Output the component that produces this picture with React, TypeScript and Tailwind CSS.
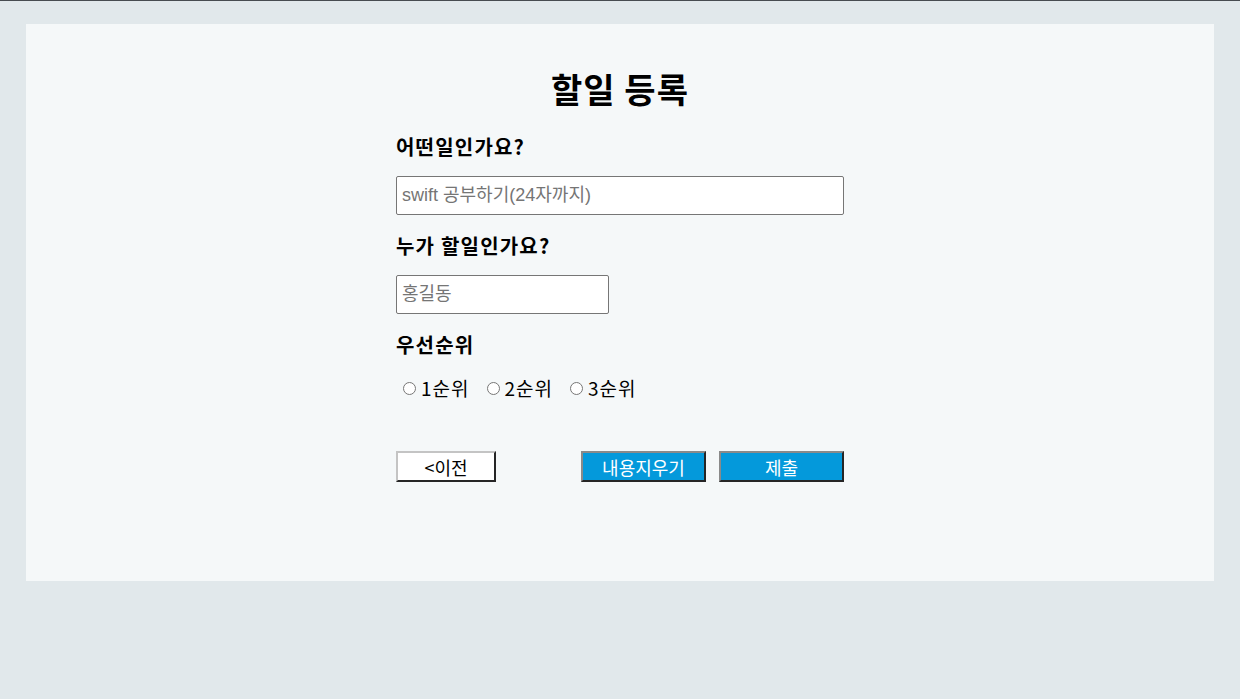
import { useState } from "react";

const font = { fontFamily: '"Noto Sans CJK KR", "Noto Sans", sans-serif' };

export default function App() {
  const [priority, setPriority] = useState<string>("");

  return (
    <div className="min-h-[699px] border-t border-[#474c50] bg-[#e1e8eb] pt-[23px]" style={font}>
      <div className="mx-[26px] flex h-[557px] flex-col items-center bg-[#f5f8f9] pt-[45px]">
        <h1 className="text-[34px] font-bold leading-[40px] tracking-[1px] text-black">할일 등록</h1>

        <form className="mt-[26px] flex w-[448px] flex-col" onSubmit={(e) => e.preventDefault()}>
          <label className="text-[20px] font-bold leading-[24px] tracking-[1.2px] text-black">어떤일인가요?</label>
          <input
            type="text"
            placeholder="swift 공부하기(24자까지)"
            className="mt-[17px] h-[39px] w-[448px] rounded-[2px] border border-[#767676] bg-white px-[5px] text-[18px] text-black placeholder:text-[#757575]"
            style={{ fontFamily: '"Liberation Sans", "Noto Sans CJK KR", sans-serif' }}
          />

          <label className="mt-[19px] text-[20px] font-bold leading-[24px] tracking-[1.2px] text-black">누가 할일인가요?</label>
          <input
            type="text"
            placeholder="홍길동"
            className="mt-[17px] h-[39px] w-[213px] rounded-[2px] border border-[#767676] bg-white px-[5px] text-[18px] text-black placeholder:text-[#757575]"
            style={{ fontFamily: '"Liberation Sans", "Noto Sans CJK KR", sans-serif' }}
          />

          <label className="mt-[19px] text-[20px] font-bold leading-[24px] tracking-[1.2px] text-black">우선순위</label>
          <div className="mt-[19px] flex items-center text-[19px] leading-[24px] tracking-[1px] text-black">
            {["1", "2", "3"].map((n) => (
              <label key={n} className="mr-[10px] flex items-center">
                <input
                  type="radio"
                  name="priority"
                  value={n}
                  checked={priority === n}
                  onChange={() => setPriority(n)}
                  className="ml-[7px] mr-[5px] h-[13px] w-[13px]"
                />
                {n}순위
              </label>
            ))}
          </div>

          <div className="mt-[51px] flex items-center">
            <button
              type="button"
              className="h-[31px] w-[100px] border-2 border-t-[#c4c4c4] border-l-[#c4c4c4] border-r-[#262626] border-b-[#262626] bg-white text-[18px] leading-none text-black"
            >
              &lt;이전
            </button>
            <button
              type="reset"
              className="ml-auto h-[31px] w-[125px] border-2 border-t-[#8a8a8a] border-l-[#8a8a8a] border-r-[#262626] border-b-[#262626] bg-[#0499db] text-[18px] leading-none text-white"
            >
              내용지우기
            </button>
            <button
              type="submit"
              className="ml-[13px] h-[31px] w-[125px] border-2 border-t-[#8a8a8a] border-l-[#8a8a8a] border-r-[#262626] border-b-[#262626] bg-[#0499db] text-[18px] leading-none text-white"
            >
              제출
            </button>
          </div>
        </form>
      </div>
    </div>
  );
}
